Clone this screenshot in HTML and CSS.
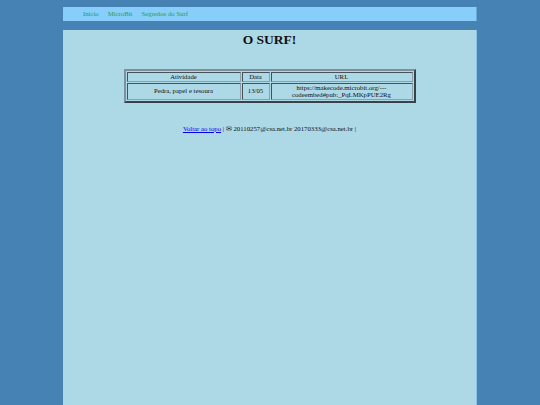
FILE: index.html
```html
<!DOCTYPE html>
<html lang="pt">
<head>
<meta charset="utf-8">
<title>O SURF!</title>
<link rel="stylesheet" href="styles.css">
</head>
<body>
<div class="wrap">
  <nav class="nav">
    <a href="#">Início</a>
    <a href="#">MicroBit</a>
    <a href="#">Segredos do Surf</a>
  </nav>
  <main class="main" id="topo">
    <h1 class="title">O SURF!</h1>
    <table class="tab">
      <colgroup>
        <col class="c1"><col class="c2"><col class="c3">
      </colgroup>
      <tr><th>Atividade</th><th>Data</th><th>URL</th></tr>
      <tr><td>Pedra, papel e tesoura</td><td>13/05</td><td>https://makecode.microbit.org/---<br>codeembed#pub:_PqLMKpPUE2Rg</td></tr>
    </table>
    <p class="foot"><a href="#topo">Voltar ao topo</a> | ✉ 20110257@csa.net.br 20170333@csa.net.br |</p>
  </main>
</div>
</body>
</html>
```

FILE: styles.css
```css
html, body {
  margin: 0;
  padding: 0;
  height: 100%;
}
body {
  background: #4682b4;
  font-family: "Liberation Serif", "Times New Roman", serif;
  font-size: 6.75px;
  color: #111;
}
.wrap {
  width: 414px;
  margin: 0 auto;
  padding-top: 7px;
  height: calc(100% - 7px);
  display: flex;
  flex-direction: column;
}
.nav {
  height: 14px;
  background: #87cefa;
  border-right: 1px solid #6aa6d6;
  box-sizing: border-box;
  display: flex;
  align-items: center;
  gap: 9px;
  padding-left: 20px;
  padding-bottom: 1px;
}
.nav a {
  color: #279a5c;
  text-decoration: none;
}
.main {
  margin-top: 9px;
  flex: 1;
  background: #add8e6;
  border-right: 1px solid #8fc2de;
  box-sizing: border-box;
  display: flex;
  flex-direction: column;
  align-items: center;
}
.title {
  margin: 2px 0 0;
  font-size: 13.5px;
  line-height: 15px;
  font-weight: bold;
}
.tab {
  margin-top: 22px;
  width: 289px;
  border: 2px outset #7d909c;
  border-spacing: 1px;
  table-layout: fixed;
}
.c1 { width: 114px; }
.c2 { width: 28px; }
.c3 { width: 142px; }
.tab th, .tab td {
  border: 1px inset #8d9fab;
  font-weight: normal;
  text-align: center;
  padding: 0 1px;
  line-height: 7.5px;
}
.tab th {
  height: 7px;
}
.tab td {
  height: 15px;
}
.foot {
  margin: 22px 0 0;
  line-height: 8px;
}
.foot a {
  color: #0000ee;
}
```
